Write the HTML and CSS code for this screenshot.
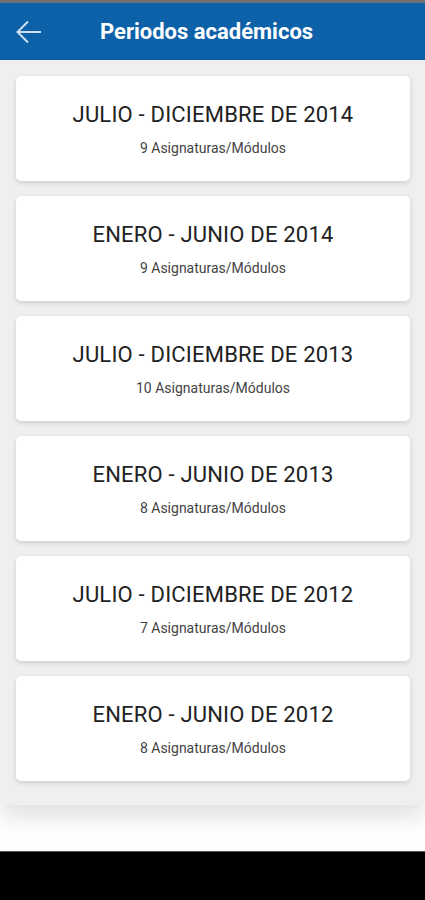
FILE: index.html
```html
<!DOCTYPE html>
<html lang="es">

<head>
    <meta charset="UTF-8">
    <meta name="viewport" content="width=device-width, initial-scale=1.0">
    <title>Periodos académicos</title>
    <link rel="stylesheet" href="styles.css">
</head>

<body>
    <div class="status"></div>
    <header class="topbar">
        <svg class="back" viewBox="0 0 26 24" width="26" height="24">
            <path d="M1.5 12H25M12 1.5L1.5 12L12 22.5" fill="none" stroke="currentColor" stroke-width="2" />
        </svg>
        <h1>Periodos académicos</h1>
    </header>

    <main class="content">
        <div class="list">
            <div class="card">
                <div class="period">JULIO - DICIEMBRE DE 2014</div>
                <div class="count">9 Asignaturas/Módulos</div>
            </div>
            <div class="card">
                <div class="period">ENERO - JUNIO DE 2014</div>
                <div class="count">9 Asignaturas/Módulos</div>
            </div>
            <div class="card">
                <div class="period">JULIO - DICIEMBRE DE 2013</div>
                <div class="count">10 Asignaturas/Módulos</div>
            </div>
            <div class="card">
                <div class="period">ENERO - JUNIO DE 2013</div>
                <div class="count">8 Asignaturas/Módulos</div>
            </div>
            <div class="card">
                <div class="period">JULIO - DICIEMBRE DE 2012</div>
                <div class="count">7 Asignaturas/Módulos</div>
            </div>
            <div class="card">
                <div class="period">ENERO - JUNIO DE 2012</div>
                <div class="count">8 Asignaturas/Módulos</div>
            </div>
        </div>
    </main>

    <div class="navbar"></div>
</body>

</html>
```

FILE: styles.css
```css
* {
    box-sizing: border-box;
}

body {
    margin: 0;
    height: 900px;
    display: flex;
    flex-direction: column;
    background-color: #fafafa;
    font-family: Roboto, "Liberation Sans", sans-serif;
    overflow: hidden;
}

.status {
    height: 3px;
    background-color: #6f7377;
}

.topbar {
    height: 57px;
    background-color: #0c61a9;
    display: flex;
    align-items: center;
    padding-left: 16px;
}

.back {
    color: #cfdff0;
    flex-shrink: 0;
}

.topbar h1 {
    margin: 0 0 0 58px;
    font-size: 22px;
    font-weight: 700;
    color: #ffffff;
}

.content {
    flex: 1;
    background: linear-gradient(#fafafa, #ffffff);
}

.list {
    background-color: #efefef;
    padding: 16px 15px 24px 16px;
    display: flex;
    flex-direction: column;
    gap: 15px;
    box-shadow: 0 12px 22px rgba(0, 0, 0, 0.12);
}

.card {
    height: 105px;
    background-color: #ffffff;
    border-radius: 5px;
    box-shadow: 0 2px 5px rgba(0, 0, 0, 0.15);
    display: flex;
    flex-direction: column;
    align-items: center;
    justify-content: center;
    gap: 13px;
}

.period {
    font-size: 22px;
    letter-spacing: 0.2px;
    color: #222222;
}

.count {
    font-size: 14px;
    color: #444444;
}

.navbar {
    height: 49px;
    background-color: #000000;
    border-top: 1px solid #555555;
}
```
